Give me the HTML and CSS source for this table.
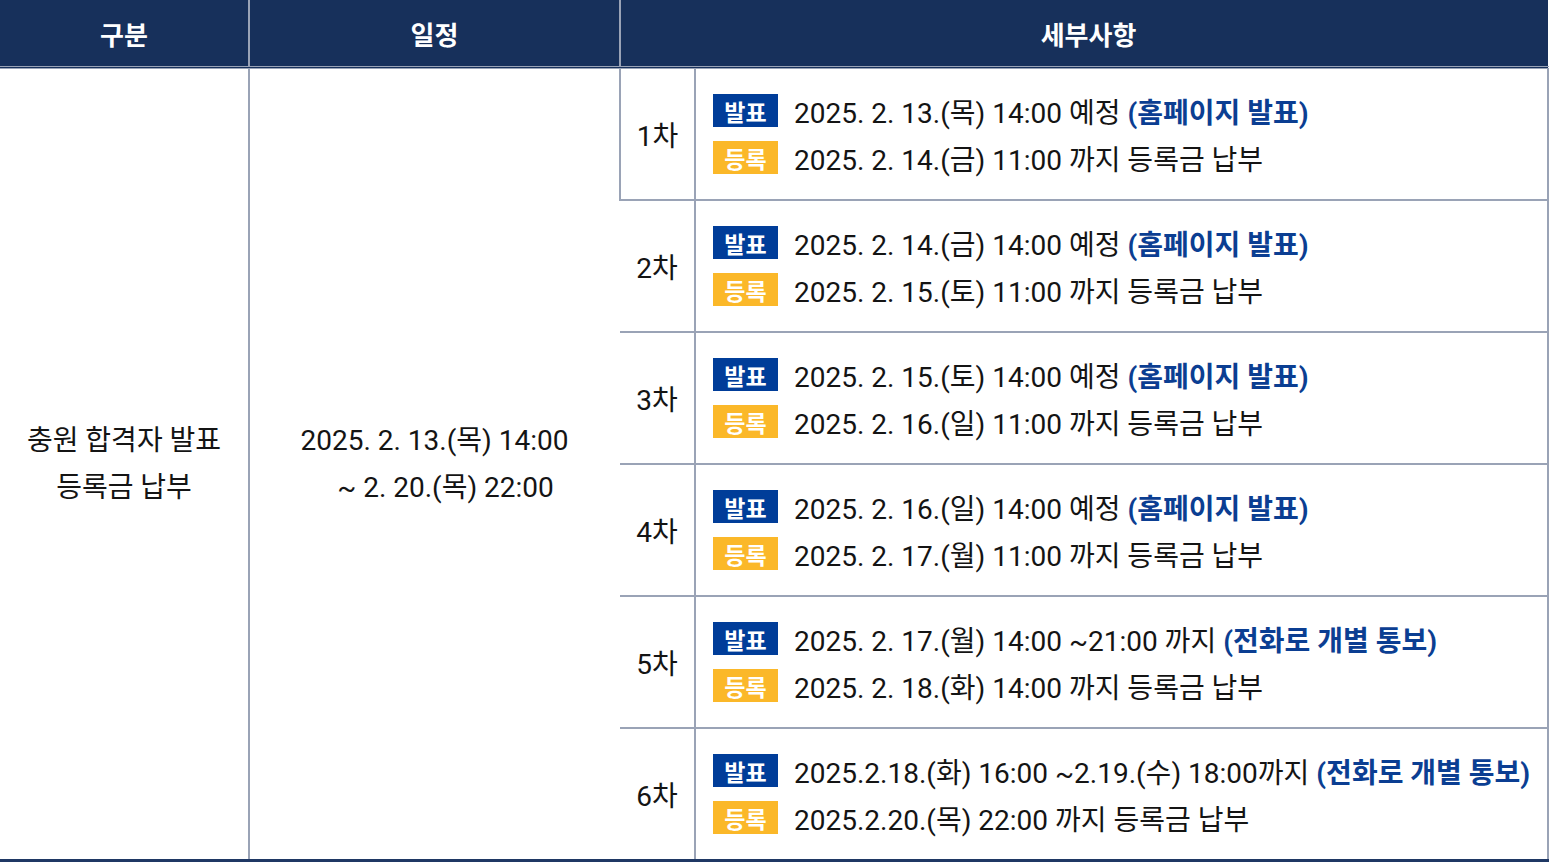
FILE: index.html
```html
<!DOCTYPE html>
<html lang="ko">

<head>
    <meta charset="UTF-8">
    <meta name="viewport" content="width=device-width, initial-scale=1.0">
    <title>충원 합격자 발표</title>
    <link rel="stylesheet" href="styles.css">
</head>

<body>
    <table class="schedule">
        <colgroup>
            <col class="col-type">
            <col class="col-date">
            <col class="col-round">
            <col class="col-detail">
        </colgroup>
        <thead>
            <tr>
                <th>구분</th>
                <th>일정</th>
                <th class="wide" colspan="2">세부사항</th>
            </tr>
        </thead>
        <tbody>
            <tr>
                <td class="center" rowspan="6">충원 합격자 발표<br>등록금 납부</td>
                <td class="center" rowspan="6">2025. 2. 13.(목) 14:00<br><span class="indent">~ 2. 20.(목) 22:00</span></td>
                <td class="round">1차</td>
                <td class="detail">
                    <div class="line"><span class="badge blue">발표</span>2025. 2. 13.(목) 14:00 예정 <b>(홈페이지 발표)</b></div>
                    <div class="line"><span class="badge yellow">등록</span>2025. 2. 14.(금) 11:00 까지 등록금 납부</div>
                </td>
            </tr>
            <tr>
                <td class="round">2차</td>
                <td class="detail">
                    <div class="line"><span class="badge blue">발표</span>2025. 2. 14.(금) 14:00 예정 <b>(홈페이지 발표)</b></div>
                    <div class="line"><span class="badge yellow">등록</span>2025. 2. 15.(토) 11:00 까지 등록금 납부</div>
                </td>
            </tr>
            <tr>
                <td class="round">3차</td>
                <td class="detail">
                    <div class="line"><span class="badge blue">발표</span>2025. 2. 15.(토) 14:00 예정 <b>(홈페이지 발표)</b></div>
                    <div class="line"><span class="badge yellow">등록</span>2025. 2. 16.(일) 11:00 까지 등록금 납부</div>
                </td>
            </tr>
            <tr>
                <td class="round">4차</td>
                <td class="detail">
                    <div class="line"><span class="badge blue">발표</span>2025. 2. 16.(일) 14:00 예정 <b>(홈페이지 발표)</b></div>
                    <div class="line"><span class="badge yellow">등록</span>2025. 2. 17.(월) 11:00 까지 등록금 납부</div>
                </td>
            </tr>
            <tr>
                <td class="round">5차</td>
                <td class="detail">
                    <div class="line"><span class="badge blue">발표</span>2025. 2. 17.(월) 14:00 ~21:00 까지 <b>(전화로 개별 통보)</b></div>
                    <div class="line"><span class="badge yellow">등록</span>2025. 2. 18.(화) 14:00 까지 등록금 납부</div>
                </td>
            </tr>
            <tr>
                <td class="round">6차</td>
                <td class="detail">
                    <div class="line"><span class="badge blue">발표</span>2025.2.18.(화) 16:00 ~2.19.(수) 18:00까지 <b>(전화로 개별 통보)</b></div>
                    <div class="line"><span class="badge yellow">등록</span>2025.2.20.(목) 22:00 까지 등록금 납부</div>
                </td>
            </tr>
        </tbody>
    </table>
</body>

</html>
```

FILE: styles.css
```css
body {
    margin: 0;
    background: #fff;
    font-family: Roboto, "Noto Sans CJK KR", sans-serif;
    color: #141414;
}

.schedule {
    width: 1548px;
    border-collapse: collapse;
    table-layout: fixed;
    font-size: 28px;
}

.col-type {
    width: 249px;
}

.col-date {
    width: 371px;
}

.col-round {
    width: 75px;
}

.col-detail {
    width: 853px;
}

.schedule th {
    height: 66px;
    padding: 0;
    background: #17305b;
    color: #fff;
    font-family: "Noto Sans CJK KR", sans-serif;
    font-weight: 700;
    font-size: 26px;
    border-left: 2px solid #9aa3b6;
    border-bottom: 3px double #9aa3b6;
}

.schedule th:first-child {
    border-left: none;
}

.schedule th.wide {
    padding-left: 8px;
}

.schedule td {
    padding: 0;
    border-left: 2px solid #9aa3b6;
    border-bottom: 2px solid #9aa3b6;
    height: 130px;
}

.schedule td:first-child {
    border-left: none;
}

.schedule tbody tr:last-child td,
.schedule td[rowspan] {
    border-bottom: 3px solid #1f3864;
}

.center {
    text-align: center;
    line-height: 47px;
}

.indent {
    padding-left: 22px;
}

.round {
    text-align: center;
}

.detail {
    padding: 0 0 0 17px !important;
    border-right: 2px solid #9aa3b6;
}

.line {
    display: flex;
    align-items: center;
    height: 47px;
    white-space: nowrap;
}

.line b {
    color: #0b3e92;
    font-weight: 700;
    margin-left: 7px;
}

.badge {
    display: inline-flex;
    align-items: center;
    justify-content: center;
    width: 65px;
    height: 33px;
    margin-right: 16px;
    color: #fff;
    font-family: "Noto Sans CJK KR", sans-serif;
    font-weight: 700;
    font-size: 23px;
}

.blue {
    background: #003d99;
}

.yellow {
    background: #fbb829;
}
```
